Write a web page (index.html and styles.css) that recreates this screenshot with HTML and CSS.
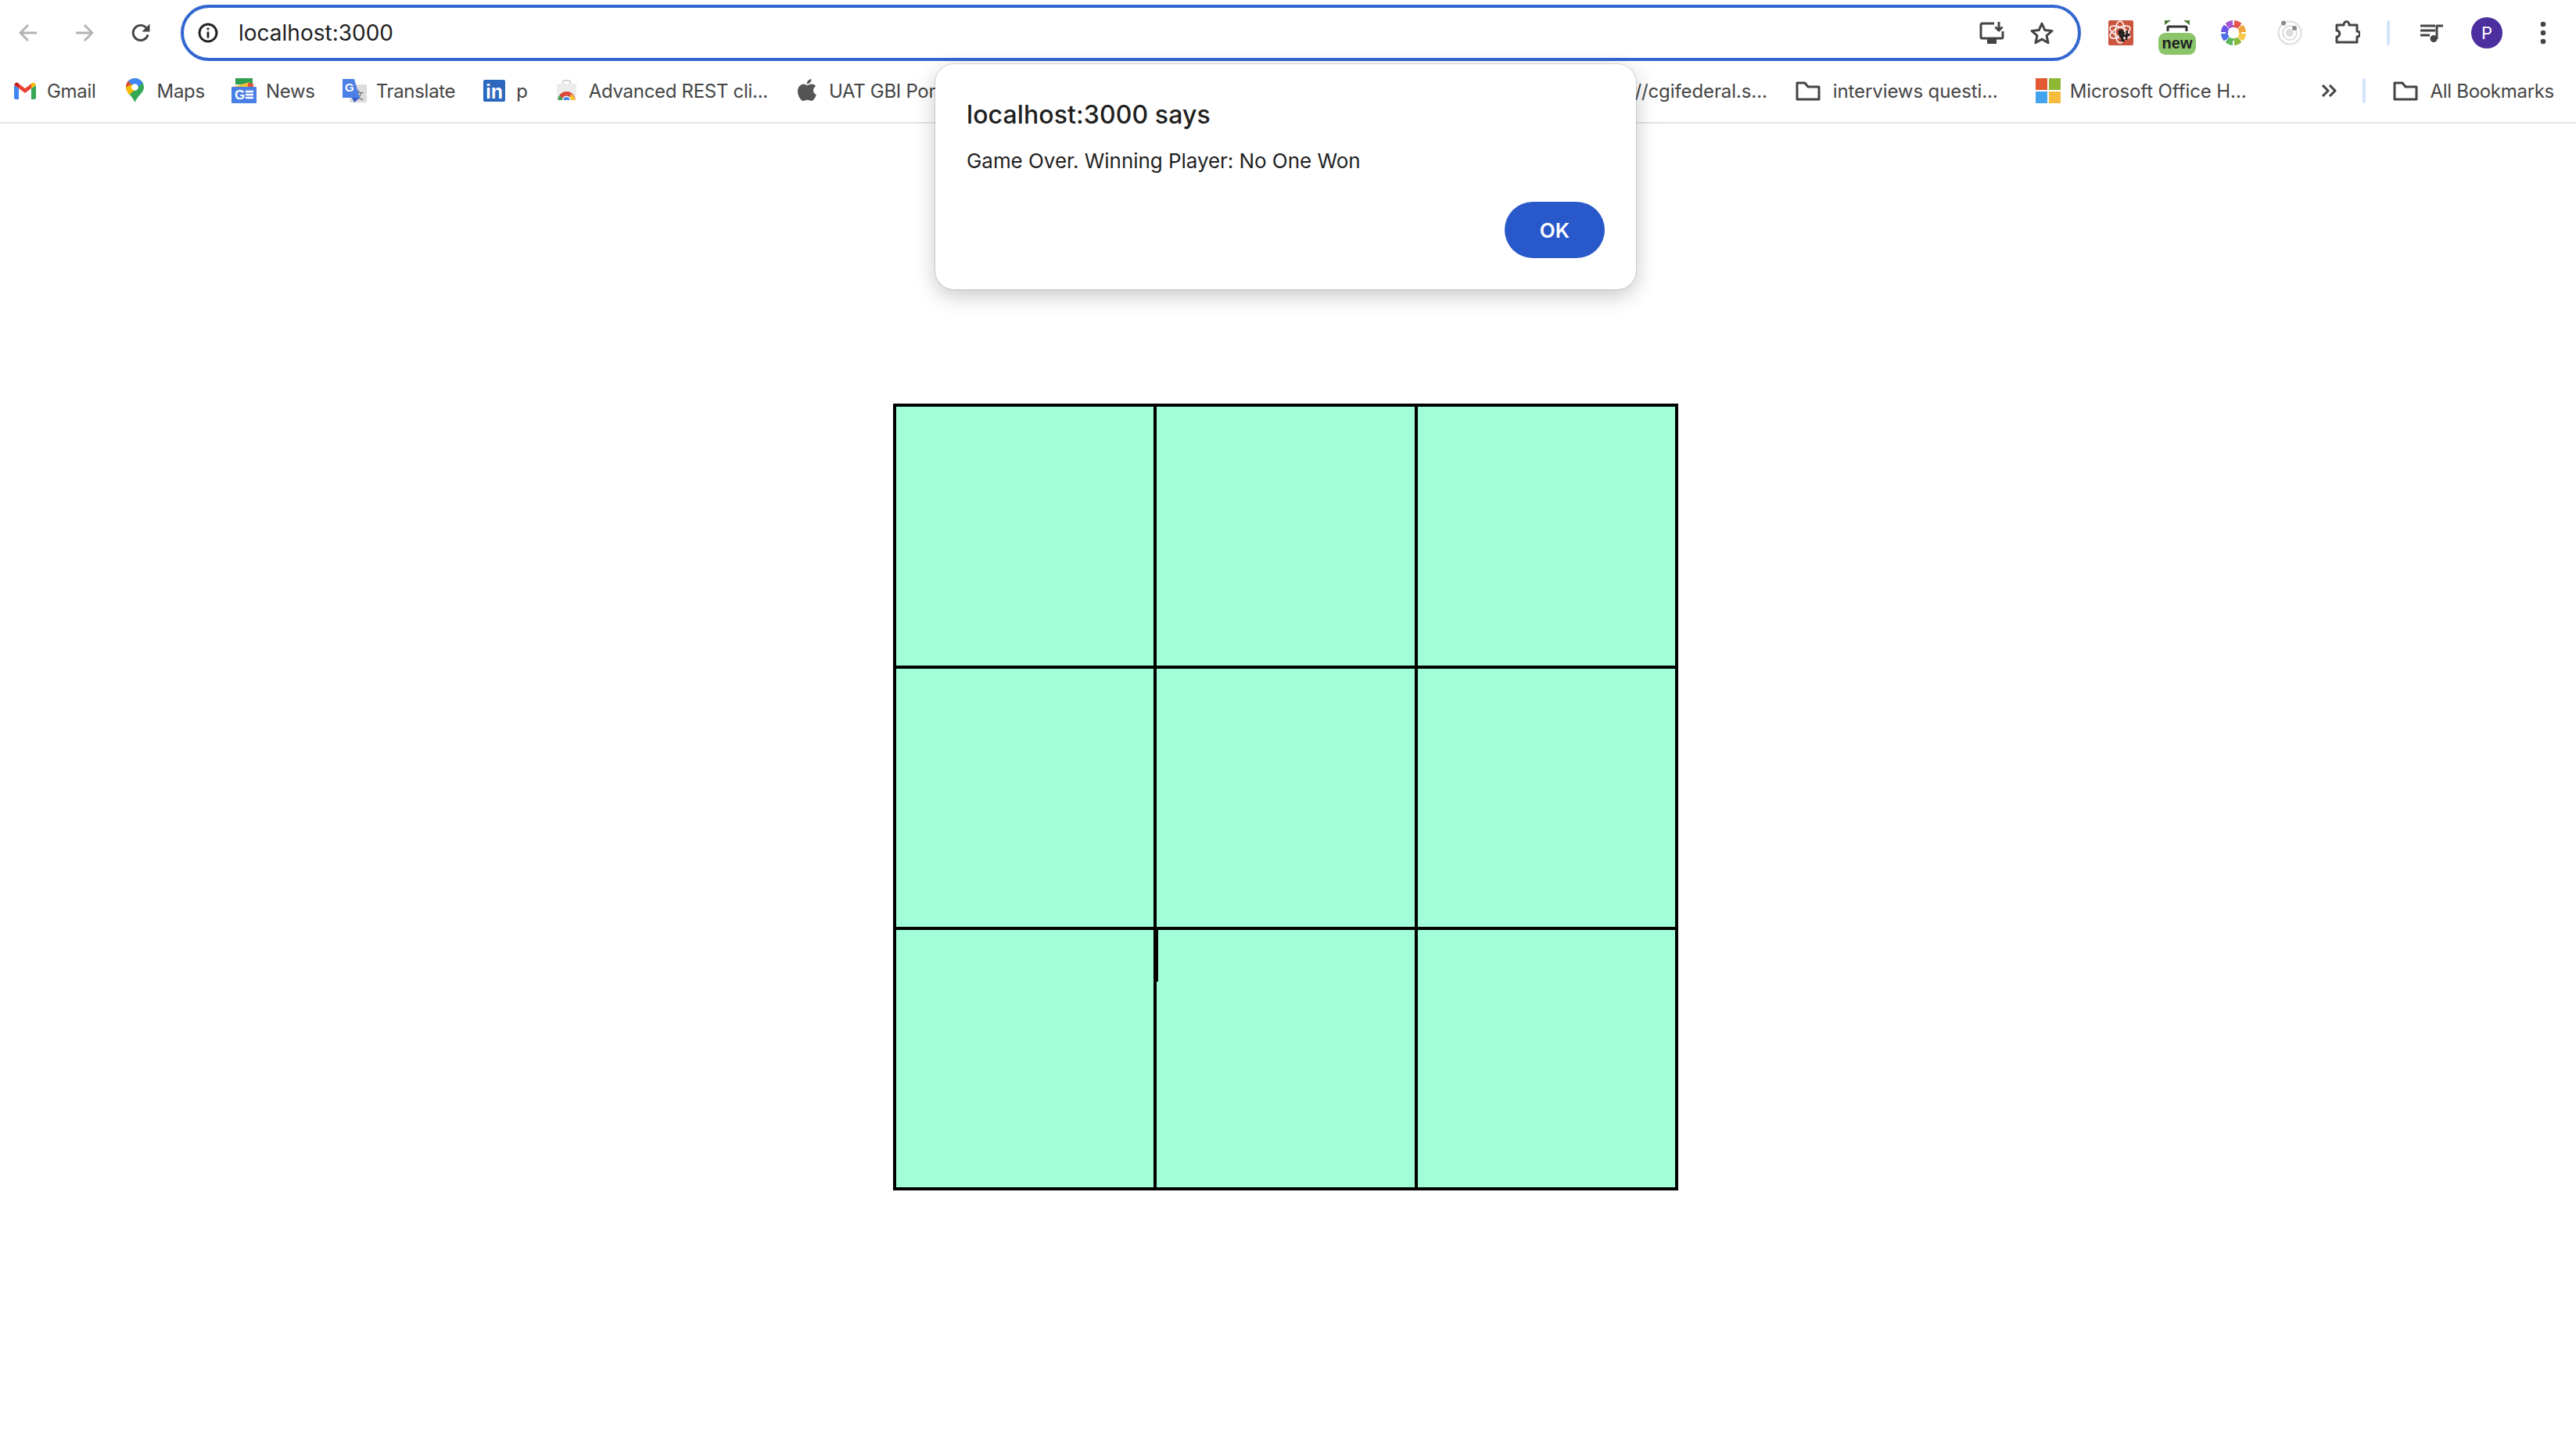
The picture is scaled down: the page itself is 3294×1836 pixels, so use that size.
FILE: index.html
```html
<!DOCTYPE html>
<html lang="en">
<head>
    <meta charset="UTF-8">
    <title>Tic Tac Toe</title>
    <link rel="stylesheet" href="styles.css">
</head>
<body>
<div class="chrome">
    <div class="toolbar">
        <svg class="nav" viewBox="0 0 24 24"><path class="dim" d="M23 12H3M12 2L2 12l10 10"/></svg>
        <svg class="nav nav-next" viewBox="0 0 24 24"><path class="dim" d="M1 12h20M12 2l10 10-10 10"/></svg>
        <svg class="nav nav-next" viewBox="0 0 25 24"><path class="line" d="M22 14.500A10 10 0 1 1 19.500 5"/><path class="solid" d="M24.500 0v10.500H14z"/></svg>

        <div class="omnibox">
            <svg class="info" viewBox="0 0 26 26"><circle cx="13" cy="13" r="11" fill="none" stroke="#222" stroke-width="3"/><rect x="11.600" y="11.500" width="2.800" height="8" fill="#222"/><rect x="11.600" y="6.500" width="2.800" height="2.800" fill="#222"/></svg>
            <span class="url">localhost:3000</span>
            <svg class="install" viewBox="0 0 32 28"><path class="line" d="M19 2H4a2 2 0 0 0-2 2v15a2 2 0 0 0 2 2h24a2 2 0 0 0 2-2v-7"/><rect class="solid" x="10" y="22" width="12" height="6"/><path class="line" d="M25 0v10M20.500 6.500l4.500 4.500 4.500-4.500"/></svg>
            <svg class="star" viewBox="0 0 32 30"><path class="line" d="M16 3l3.800 8.600 9.200.9-7 6.200 2.100 9.100L16 23.100l-8.100 4.700L10 18.700l-7-6.200 9.200-.9z"/></svg>
        </div>

        <svg class="ext ext-red" viewBox="0 0 32 32">
            <rect width="32" height="32" rx="2" fill="#cb553f"/>
            <g fill="none" stroke="#fff" stroke-width="1.500"><ellipse cx="15" cy="15" rx="14" ry="6" transform="rotate(25 15 15)"/><ellipse cx="15" cy="15" rx="14" ry="6" transform="rotate(-25 15 15)"/><ellipse cx="15" cy="15" rx="14" ry="6" transform="rotate(90 15 15)"/></g>
            <circle cx="16" cy="15" r="3.500" fill="#222"/>
            <path d="M14 17l6 10M20 15l-3 12M24 13l-1 12M14 21l14-3" stroke="#222" stroke-width="2.500" fill="none"/>
        </svg>
        <svg class="ext-new" viewBox="0 0 48 44">
            <path d="M8 0h8l-8 6zM40 0h-8l8 6z" fill="#4a7d33"/>
            <path d="M12 14V9a1 1 0 0 1 1-1h22a1 1 0 0 1 1 1v5" fill="none" stroke="#333" stroke-width="3"/>
            <rect y="16" width="48" height="28" rx="9" fill="#8cc46a"/>
            <text class="new-text" x="24" y="36" text-anchor="middle">new</text>
        </svg>
        <div class="wheel"></div>
        <svg class="ext ext-grey" viewBox="0 0 32 32">
            <g fill="none" stroke="#dcdcdc" stroke-width="2"><circle cx="16" cy="16" r="14.500"/><circle cx="16" cy="16" r="9"/></g>
            <circle cx="16" cy="16" r="5" fill="#dcdcdc"/>
            <circle cx="8" cy="3.500" r="3" fill="#8a8a8a"/><circle cx="22" cy="10" r="3" fill="#8a8a8a"/>
        </svg>
        <svg class="ext ext-puzzle" viewBox="0 0 32 32"><path class="line" d="M2 8h9c0-6 7-6 7 0h10v8c5 0 5 7 0 7v7H2v-7c5 0 5-8 0-8z"/></svg>
        <div class="tb-sep"></div>
        <svg class="ext-queue" viewBox="0 0 29 23"><path class="line" d="M0 2h19M0 8h19M0 14h12M21 19V2h8"/><circle class="solid" cx="17" cy="18.500" r="4.500"/></svg>
        <div class="avatar">P</div>
        <svg class="menu" viewBox="0 0 8 30"><circle class="solid" cx="4" cy="4" r="3.300"/><circle class="solid" cx="4" cy="15" r="3.300"/><circle class="solid" cx="4" cy="26" r="3.300"/></svg>
    </div>

    <div class="bookmarks">
        <div class="bm-group">
            <a class="bm">
                <svg class="fav" viewBox="0 0 32 32">
                    <path d="M2 9v16a2 2 0 0 0 2 2h4V13z" fill="#4285f4"/>
                    <path d="M24 13v14h4a2 2 0 0 0 2-2V9z" fill="#34a853"/>
                    <path d="M8 13l8 6 8-6V7l-8 6-8-6z" fill="#ea4335"/>
                    <path d="M2 10C2 6 6 4 8 7v6L2 8.500z" fill="#c5221f"/>
                    <path d="M24 7c2-3 6-1 6 3v-1.500L24 13z" fill="#fbbc04"/>
                </svg>
                <span>Gmail</span>
            </a>
            <a class="bm">
                <svg class="fav" viewBox="0 0 32 32">
                    <path d="M15.500 0C9 0 4 5 4 11.500 4 19 13 23 15.500 31 18 23 27 19 27 11.500 27 5 22 0 15.500 0z" fill="#34a853"/>
                    <path d="M7 3.500C5 5.500 4 8.500 4 11.500L11 8z" fill="#ea4335"/>
                    <path d="M7 3.500C12 -1.500 22 -1 25.500 6L20 11 11 8z" fill="#4285f4"/>
                    <path d="M4 11.500C4 15 6 18 8.500 21L20 11l-9-3z" fill="#fbbc04"/>
                    <circle cx="15.500" cy="11.500" r="4.300" fill="#fff"/>
                </svg>
                <span>Maps</span>
            </a>
            <a class="bm">
                <svg class="fav" viewBox="0 0 32 32">
                    <rect x="5" y="0" width="22" height="8" fill="#2e9e50"/>
                    <path d="M2 11l21-6 3 6z" fill="#f6bf3a"/>
                    <path d="M21 6l7 1v5h-7z" fill="#e0533d"/>
                    <rect y="11" width="32" height="21" rx="1" fill="#4a7fe5"/>
                    <text class="logo-g" x="4" y="27">G</text>
                    <path d="M18 17h10M18 21h10M18 25h10" stroke="#fff" stroke-width="2.400"/>
                </svg>
                <span>News</span>
            </a>
            <a class="bm">
                <svg class="fav" viewBox="0 0 32 32">
                    <rect x="10" y="8" width="22" height="23" rx="1" fill="#dcdcdc"/>
                    <text class="logo-wen" x="15" y="26">文</text>
                    <path d="M1 1h15l7 24H1z" fill="#4a7fe5"/>
                    <path d="M13 25h10l-7 6z" fill="#3b5bc8"/>
                    <text class="logo-g logo-g-sm" x="4" y="17">G</text>
                </svg>
                <span>Translate</span>
            </a>
            <a class="bm">
                <svg class="fav" viewBox="0 0 32 32">
                    <rect x="2" y="2" width="28" height="28" rx="2" fill="#2c68be"/>
                    <text class="logo-in" x="5" y="26">in</text>
                </svg>
                <span>p</span>
            </a>
            <a class="bm">
                <svg class="fav" viewBox="0 0 32 32">
                    <path d="M11 7V4a1 1 0 0 1 1-1h7a1 1 0 0 1 1 1v3" fill="none" stroke="#c8c8c8" stroke-width="1.500"/>
                    <path d="M3 7h25l-.5 21h-24z" fill="#ececec"/>
                    <path d="M4.500 28a11 11 0 0 1 22 0z" fill="#d9483b"/>
                    <path d="M4.500 28a11 11 0 0 1 2-6.500L12 28z" fill="#3ba758"/>
                    <path d="M19 28a11 11 0 0 0 0-1l2-7c3.500 2 5.500 5 5.500 8z" fill="#f4c430"/>
                    <path d="M10 28a5.500 5.500 0 0 1 11 0z" fill="#fff"/>
                    <path d="M11.500 28a4 4 0 0 1 8 0z" fill="#4a86e8"/>
                </svg>
                <span>Advanced REST cli...</span>
            </a>
            <a class="bm">
                <svg class="fav" viewBox="0 0 32 32">
                    <path d="M21.500 1c.2 3.500-2.800 6.500-5.800 6.300C15.400 4 18.500 1.300 21.500 1z" fill="#555"/>
                    <path d="M16 9c1.500 0 3.500-1.600 6-1.600 2 0 4 1 5 2.800-4.500 2.800-3.700 9 .9 10.800C26.500 25 24 29 21.500 29c-1.800 0-2.700-1.200-5-1.200S13 29 11.500 29C8 29 4 22.500 4 17c0-6 4-9.500 7.500-9.500 2 0 3.500 1.500 4.500 1.500z" fill="#555"/>
                </svg>
                <span>UAT GBI Portal</span>
            </a>
        </div>

        <div class="bm-group bm-mid">
            <a class="bm"><span>https://cgifederal.s...</span></a>
            <a class="bm bm-folder">
                <svg class="fav" viewBox="0 0 32 32"><path class="line" d="M2 6h10l4 5h14v16H2z"/></svg>
                <span>interviews questi...</span>
            </a>
            <a class="bm bm-office">
                <svg class="fav" viewBox="0 0 32 32">
                    <rect width="15" height="15" fill="#e25a34"/><rect x="17" width="15" height="15" fill="#8db833"/>
                    <rect y="17" width="15" height="15" fill="#44a3ee"/><rect x="17" y="17" width="15" height="15" fill="#f5bb3c"/>
                </svg>
                <span>Microsoft Office H...</span>
            </a>
        </div>

        <svg class="more" viewBox="0 0 20 16"><path class="line" d="M2 1l7 7-7 7M11 1l7 7-7 7"/></svg>
        <div class="bm-sep"></div>
        <a class="bm bm-folder">
            <svg class="fav" viewBox="0 0 32 32"><path class="line" d="M2 6h10l4 5h14v16H2z"/></svg>
            <span>All Bookmarks</span>
        </a>
    </div>
</div>

<div class="board">
    <div class="cell"></div>
    <div class="cell"></div>
    <div class="cell"></div>
    <div class="cell"></div>
    <div class="cell"></div>
    <div class="cell"></div>
    <div class="cell"></div>
    <div class="cell"></div>
    <div class="cell"></div>
    <div class="caret"></div>
</div>

<div class="dialog">
    <div class="dialog-title">localhost:3000 says</div>
    <div class="dialog-msg">Game Over. Winning Player: No One Won</div>
    <div class="dialog-foot"><button class="ok">OK</button></div>
</div>
</body>
</html>
```

FILE: styles.css
```css
*{
    margin: 0;
    padding: 0;
    box-sizing: border-box;
}
body{
    background: #fff;
    font-family: "Inter", "Roboto", sans-serif;
    overflow: hidden;
    height: 1836px;
}
svg{
    display: block;
    flex: none;
}
.line{
    fill: none;
    stroke: #444;
    stroke-width: 3;
    stroke-linejoin: round;
}
.solid{
    fill: #444;
}
.dim{
    fill: none;
    stroke: #b4b4b4;
    stroke-width: 3;
}

/* browser bar */
.chrome{
    border-bottom: 2px solid #e3e3e3;
}
.toolbar{
    height: 84px;
    padding-left: 24px;
    display: flex;
    align-items: center;
}
.nav{
    width: 24px;
    height: 24px;
}
.nav-next{
    margin-left: 48px;
}
.omnibox{
    width: 2430px;
    height: 72px;
    margin-left: 39px;
    padding: 0 30px 0 18px;
    border: 4px solid #3367d0;
    border-radius: 36px;
    display: flex;
    align-items: center;
}
.info{
    width: 26px;
    height: 26px;
}
.url{
    margin-left: 26px;
    font-size: 28px;
    color: #222;
    flex: 1;
}
.install{
    width: 32px;
    height: 28px;
}
.star{
    width: 32px;
    height: 30px;
    margin-left: 32px;
}
.ext{
    width: 32px;
    height: 32px;
}
.ext-red{
    margin-left: 35px;
}
.ext-new{
    width: 48px;
    height: 44px;
    margin-left: 32px;
    margin-top: 12px;
}
.new-text{
    font-family: "Liberation Sans", sans-serif;
    font-weight: 700;
    font-size: 20px;
    fill: #222;
}
.wheel{
    width: 32px;
    height: 32px;
    margin-left: 32px;
    border-radius: 50%;
    background:
        radial-gradient(circle, #fff 7px, transparent 7.5px),
        conic-gradient(#fff 0 3deg, #e5534b 3deg 42deg, #fff 42deg 48deg, #f0a63b 48deg 87deg, #fff 87deg 93deg, #f8c84b 93deg 132deg, #fff 132deg 138deg, #8abb3c 138deg 177deg, #fff 177deg 183deg, #5cb85c 183deg 222deg, #fff 222deg 228deg, #4e6fe8 228deg 267deg, #fff 267deg 273deg, #6b57e6 273deg 312deg, #fff 312deg 318deg, #a855d0 318deg 357deg, #fff 357deg);
}
.ext-grey{
    margin-left: 40px;
}
.ext-puzzle{
    margin-left: 42px;
    margin-bottom: 4px;
}
.tb-sep{
    width: 4px;
    height: 32px;
    margin-left: 34px;
    border-radius: 2px;
    background: #d3e3fd;
}
.ext-queue{
    width: 29px;
    height: 23px;
    margin-left: 39px;
}
.avatar{
    width: 40px;
    height: 40px;
    margin-left: 36px;
    border-radius: 50%;
    background: #4c2f9f;
    color: #fff;
    font-size: 22px;
    line-height: 40px;
    text-align: center;
}
.menu{
    width: 8px;
    height: 30px;
    margin-left: 48px;
}

/* bookmarks */
.bookmarks{
    height: 72px;
    padding: 0 28px 8px 16px;
    display: flex;
    align-items: center;
}
.bm-group{
    display: flex;
    align-items: center;
    gap: 34px;
}
.bm-mid{
    margin-left: auto;
    gap: 36px;
}
.bm{
    display: flex;
    align-items: center;
    gap: 12px;
    font-size: 24px;
    letter-spacing: -0.3px;
    color: #444;
    white-space: nowrap;
}
.bm-mid .bm{
    letter-spacing: -0.1px;
}
.bm-folder{
    gap: 16px;
}
.bm-office{
    margin-left: 12px;
}
.fav{
    width: 32px;
    height: 32px;
}
.logo-g{
    font-family: "Liberation Sans", sans-serif;
    font-weight: 700;
    font-size: 17px;
    fill: #fff;
}
.logo-g-sm{
    font-size: 15px;
}
.logo-wen{
    font-family: "Noto Sans CJK SC", sans-serif;
    font-size: 13px;
    fill: #666;
}
.logo-in{
    font-family: "Liberation Sans", sans-serif;
    font-weight: 700;
    font-size: 25px;
    fill: #fff;
}
.more{
    width: 20px;
    height: 16px;
    margin-left: 95px;
}
.bm-sep{
    width: 4px;
    height: 32px;
    margin: 0 35px 0 33px;
    border-radius: 2px;
    background: #d3e3fd;
}

/* game */
.board{
    position: relative;
    width: 1004px;
    height: 1006px;
    margin: 358px 0 0 1142px;
    padding: 4px;
    background: #000;
    display: grid;
    grid-template-columns: 329px 330px 329px;
    grid-template-rows: 331px 330px 329px;
    gap: 4px;
}
.cell{
    background: #a1fed8;
}
.caret{
    position: absolute;
    left: 337px;
    top: 673px;
    width: 2px;
    height: 66px;
    background: #000;
}

/* alert */
.dialog{
    position: absolute;
    left: 1196px;
    top: 82px;
    width: 896px;
    height: 288px;
    padding: 45px 40px 40px 40px;
    background: #fff;
    border-radius: 24px;
    box-shadow: 0 0 0 1px rgba(0,0,0,0.12), 0 8px 28px rgba(0,0,0,0.22);
}
.dialog-title{
    font-size: 32px;
    line-height: 40px;
    font-weight: 500;
    letter-spacing: 0.1px;
    color: #1f1f1f;
}
.dialog-msg{
    margin-top: 22px;
    font-size: 26px;
    line-height: 34px;
    letter-spacing: -0.05px;
    color: #1f1f1f;
}
.dialog-foot{
    margin-top: 35px;
    display: flex;
    justify-content: flex-end;
}
.ok{
    width: 128px;
    height: 72px;
    border: none;
    border-radius: 36px;
    background: #2858ca;
    color: #fff;
    font-family: inherit;
    font-size: 26px;
    font-weight: 600;
}
```
